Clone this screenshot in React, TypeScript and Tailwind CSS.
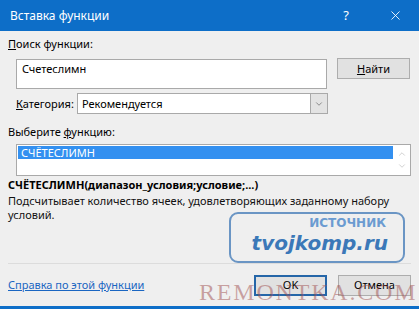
import { ChevronDown, ChevronUp, X } from "lucide-react";

// Диалог «Вставка функции» (Excel)
export default function App() {
  return (
    <div className="relative w-[419px] h-[309px] overflow-hidden bg-[#efefef] flex flex-col font-['Noto_Sans',sans-serif] text-[11px] text-black">
      {/* title bar */}
      <div className="h-[31px] bg-[#0d6ec8] flex items-center pl-[10px] text-white text-[12px]">
        <span>Вставка функции</span>
        <span className="ml-auto mr-[39px] text-[13px]">?</span>
        <X size={15} strokeWidth={1.4} className="mr-[16px]" />
      </div>

      <div className="flex-1 flex flex-col px-[8px] leading-[14px]">
        <div className="mt-[6px]">
          <u>П</u>оиск функции:
        </div>

        <div className="flex items-start mt-[8px] pl-[8px]">
          <div className="w-[311px] h-[30px] bg-white border border-[#a9a9a9] pl-[5px] pt-[2px]">
            Счетеслимн
          </div>
          <button className="ml-[10px] w-[73px] h-[21px] bg-[#e1e1e1] border border-[#adadad] mt-[-1px]">
            <u>Н</u>айти
          </button>
        </div>

        <div className="flex items-center mt-[4px] pl-[8px] h-[21px]">
          <span>
            <u>К</u>атегория:
          </span>
          <div className="ml-[3px] w-[251px] h-[21px] bg-white border border-[#a9a9a9] flex items-center">
            <span className="pl-[4px]">Рекомендуется</span>
            <div className="ml-auto w-[17px] h-full bg-[#e3e3e3] border-l border-[#a9a9a9] flex items-center justify-center text-[#555]">
              <ChevronDown size={10} strokeWidth={1.5} />
            </div>
          </div>
        </div>

        <div className="mt-[11px]">
          Выберите <u>ф</u>ункцию:
        </div>

        <div className="mt-[5px] ml-[8px] w-[395px] h-[32px] bg-white border border-[#a9a9a9] flex">
          <div className="flex-1 pl-[1px] pt-[1px]">
            <div className="h-[13px] bg-[#3390f0] text-white leading-[13px] pl-[3px]">СЧЁТЕСЛИМН</div>
          </div>
          <div className="w-[17px] flex flex-col items-center justify-center gap-[2px] text-[#b5b5b5]">
            <ChevronUp size={10} strokeWidth={1.5} />
            <ChevronDown size={10} strokeWidth={1.5} />
          </div>
        </div>

        <div className="mt-[2px] font-bold">СЧЁТЕСЛИМН(диапазон_условия;условие;...)</div>
        <div className="mt-[2px] leading-[14px] text-[#111] whitespace-nowrap">
          <div>Подсчитывает количество ячеек, удовлетворяющих заданному набору</div>
          <div>условий.</div>
        </div>

        <div className="mt-[auto] h-px bg-[#dcdcdc]" />

        <div className="h-[42px] flex items-center">
          <a className="text-[#1a66c2] underline">Справка по этой функции</a>
          <button className="ml-auto w-[73px] h-[21px] bg-[#e1e1e1] border-2 border-[#2566a8]">OK</button>
          <button className="ml-[11px] w-[73px] h-[21px] bg-[#e1e1e1] border border-[#adadad]">Отмена</button>
        </div>
      </div>

      <div className="h-[3px] bg-[#0d6ec8]" />

      {/* watermark: tvojkomp.ru */}
      <div className="absolute left-[229px] top-[212px] w-[176px] h-[51px] border-2 border-[#6a95c4] rounded-[9px] flex flex-col items-end pr-[15px] font-['DejaVu_Sans',sans-serif] font-bold">
        <span className="text-[12px] leading-[13px] mt-[3px] mr-[2px] text-[#6b9bd1]">ИСТОЧНИК</span>
        <span className="text-[20px] leading-[26px] italic text-[#3b78b8]">tvojkomp.ru</span>
      </div>

      {/* watermark: REMONTKA.COM */}
      <div className="absolute left-[199px] top-[279px] font-['Liberation_Serif',serif] text-[24px] leading-[26px] tracking-[1.8px] text-[#a05050]/50 pointer-events-none">
        REMONTKA.COM
      </div>
    </div>
  );
}
